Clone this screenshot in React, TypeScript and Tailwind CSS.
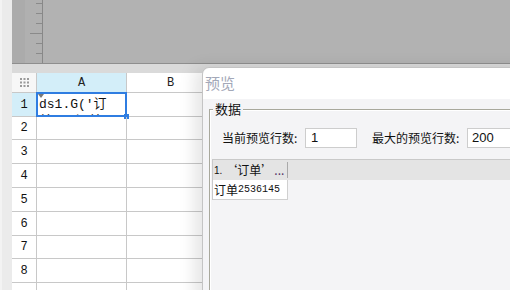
import React from "react";

const CJK = '"Noto Sans CJK SC", "Liberation Sans", sans-serif';

export default function App() {
  const rows = [
    { n: 1, h: 24 },
    { n: 2, h: 23 },
    { n: 3, h: 24 },
    { n: 4, h: 24 },
    { n: 5, h: 24 },
    { n: 6, h: 24 },
    { n: 7, h: 23 },
    { n: 8, h: 24 },
    { n: 9, h: 24 },
  ];
  return (
    <div
      className="relative w-[510px] h-[290px] overflow-hidden flex bg-[#ebebeb]"
      style={{ fontFamily: CJK }}
    >
      <div className="w-[12px] shrink-0 bg-[#ebebeb] border-l-2 border-[#f3f3f3]" />
      <div className="flex-1 flex flex-col min-w-0">
        {/* top gray area */}
        <div className="h-[64px] shrink-0 flex bg-[#b2b2b2] border-b border-[#8e8e8e]">
          <div className="w-[13px] bg-[#ababab]" />
          <div className="w-[18px] bg-[#b0b0b0] border-r border-[#888888]">
            <svg width="17" height="63" viewBox="0 0 17 63">
              {[3, 13, 23, 43, 53].map((y) => (
                <line key={y} x1="11" x2="17" y1={y + 0.5} y2={y + 0.5} stroke="#8a8a8a" />
              ))}
              <line x1="5" x2="17" y1="33.5" y2="33.5" stroke="#8a8a8a" />
            </svg>
          </div>
          <div className="flex-1" />
        </div>
        <div className="h-[9px] shrink-0 bg-[#dadada]" />
        {/* header row */}
        <div className="h-[20px] shrink-0 flex bg-white border-b border-[#c8c8c8]">
          <div className="w-[25px] shrink-0 border-r border-[#c8c8c8] bg-[#f7f7f7] flex items-center justify-center">
            <svg width="9" height="9" viewBox="0 0 9 9">
              {[0, 3.5, 7].map((x) =>
                [0, 3.5, 7].map((y) => (
                  <rect key={`${x}-${y}`} x={x} y={y} width="2" height="2" fill="#9a9a9a" />
                ))
              )}
            </svg>
          </div>
          <div
            className="w-[90px] shrink-0 border-r border-[#c8c8c8] bg-[#d3eef9] flex items-center justify-center text-[12px] text-[#222]"
            style={{ fontFamily: '"Liberation Mono", monospace' }}
          >
            A
          </div>
          <div
            className="w-[88px] shrink-0 border-r border-[#c8c8c8] flex items-center justify-center text-[12px] text-[#222]"
            style={{ fontFamily: '"Liberation Mono", monospace' }}
          >
            B
          </div>
          <div className="flex-1" />
        </div>
        {rows.map((r) => (
          <div
            key={r.n}
            className="shrink-0 flex bg-white border-b border-[#c8c8c8]"
            style={{ height: r.h }}
          >
            <div
              className={`w-[25px] shrink-0 border-r border-[#c8c8c8] flex items-center justify-center text-[12px] text-[#111] ${
                r.n === 1 ? "bg-[#d3eef9]" : "bg-white"
              }`}
              style={{ fontFamily: '"Liberation Mono", monospace' }}
            >
              {r.n < 9 ? r.n : ""}
            </div>
            <div className="relative w-[90px] shrink-0 border-r border-[#c8c8c8]">
              {r.n === 1 && (
                <>
                  <div
                    className="absolute inset-0 overflow-hidden pl-[2px] pt-[3px] text-[13px] leading-[17px] text-[#111] whitespace-nowrap"
                    style={{ fontFamily: '"Liberation Mono", "Noto Sans CJK SC", monospace' }}
                  >
                    ds1.G('订
                    <br />
                    单','订单号')
                  </div>
                  <div className="absolute left-[1px] top-[1px] w-0 h-0 border-l-[3px] border-r-[3px] border-t-[4px] border-l-transparent border-r-transparent border-t-[#777]" />
                  <div className="absolute -left-[1px] -top-[1px] -right-[1px] -bottom-[1px] border-2 border-[#2f7de1]" />
                  <div className="absolute -right-[3px] -bottom-[3px] w-[5px] h-[5px] bg-[#2f7de1]" />
                </>
              )}
            </div>
            <div className="w-[88px] shrink-0 border-r border-[#c8c8c8]" />
            <div className="flex-1" />
          </div>
        ))}
      </div>

      {/* preview dialog */}
      <div className="absolute left-[202px] top-[67px] w-[330px] h-[240px] rounded-tl-[7px] border border-[#c4c4c4] bg-[#f4f4f6] shadow-[-8px_0_16px_rgba(0,0,0,0.10)] overflow-hidden">
        <div className="h-[31px] bg-white rounded-tl-[7px] flex items-center pl-[2px] text-[15px] text-[#a3a8b8]">
          预览
        </div>
        <div className="pl-[6px] pt-[10px]">
          <div className="relative border border-[#a8a89c] shadow-[inset_1px_1px_0_#ffffff] h-[200px]">
            <div className="absolute -top-[9px] left-[3px] px-[2px] bg-[#f4f4f6] text-[13px] leading-[16px] text-[#111]">
              数据
            </div>
            <div className="flex items-center pl-[12px] mt-[18px] h-[20px] text-[12px] text-[#111]">
              <div className="w-[83px] shrink-0">当前预览行数:</div>
              <div
                className="w-[52px] h-[20px] shrink-0 bg-white border border-[#cdcdcd] flex items-center pl-[5px] text-[13px]"
                style={{ fontFamily: '"Liberation Sans", sans-serif' }}
              >
                1
              </div>
              <div className="w-[15px] shrink-0" />
              <div className="w-[95px] shrink-0">最大的预览行数:</div>
              <div
                className="w-[60px] h-[20px] shrink-0 bg-white border border-[#cdcdcd] flex items-center pl-[4px] text-[13px]"
                style={{ fontFamily: '"Liberation Sans", sans-serif' }}
              >
                200
              </div>
            </div>
            <div className="ml-[2px] mt-[11px] border-t border-l border-[#c9c9c9]">
              <div className="h-[20px] bg-[#e4e4e4] flex">
                <div className="w-[75px] flex items-center pl-[1px] border-r border-[#a9a9a9] my-[2px] text-[12px] text-[#111] whitespace-nowrap">
                  <span className="text-[10px]" style={{ fontFamily: '"Liberation Sans", sans-serif' }}>1.</span>
                  <span className="ml-[3px]">‘订单’</span>
                  <span className="ml-[1px] text-[#553366]">...</span>
                </div>
              </div>
              <div className="w-[75px] h-[20px] bg-white border-r border-b border-[#d0d0d0] flex items-center pl-[1px] text-[12px] text-[#111] whitespace-nowrap">
                订单
                <span className="text-[10px]" style={{ fontFamily: '"Liberation Mono", monospace' }}>2536145</span>
              </div>
            </div>
          </div>
        </div>
      </div>
    </div>
  );
}
